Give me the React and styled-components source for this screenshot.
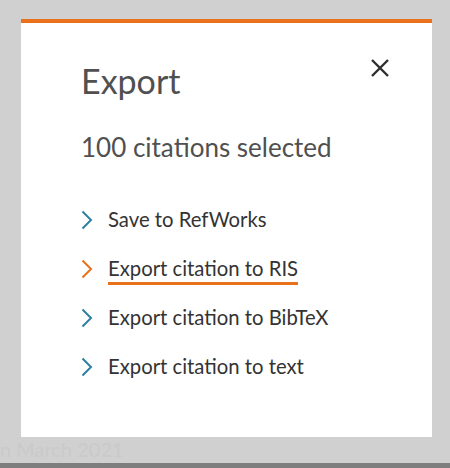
import React from "react"
import styled, { createGlobalStyle } from "styled-components"

const GlobalStyle = createGlobalStyle`
  html, body {
    margin: 0;
    padding: 0;
    background: #d0d0d0;
  }
  body {
    font-family: Lato, "Open Sans", sans-serif;
  }
`

const items = [
  { label: "Save to RefWorks" },
  { label: "Export citation to RIS", active: true },
  { label: "Export citation to BibTeX" },
  { label: "Export citation to text" }
]

const Chevron = ({ color }) => (
  <svg width="12" height="20" viewBox="0 0 12 20" fill="none">
    <path d="M1.5 1.5 L10 10 L1.5 18.5" stroke={color} strokeWidth="2" />
  </svg>
)

const App = () => {
  return (
    <Page>
      <GlobalStyle />
      <Backdrop>
        <Modal>
          <Header>
            <Title>Export</Title>
            <CloseButton aria-label="Close">
              <svg width="18" height="18" viewBox="0 0 18 18">
                <path d="M1 1 L17 17 M17 1 L1 17" stroke="#2e2e2e" strokeWidth="2.4" />
              </svg>
            </CloseButton>
          </Header>
          <Subtitle>100 citations selected</Subtitle>
          <List>
            {items.map((item) => (
              <Item key={item.label}>
                <Chevron color={item.active ? "#e9711c" : "#2e7fa0"} />
                <ItemLabel $active={item.active}>{item.label}</ItemLabel>
              </Item>
            ))}
          </List>
        </Modal>
        <GhostText>n March 2021</GhostText>
      </Backdrop>
      <BottomBar />
    </Page>
  )
}

export default App

const Page = styled.div`
  height: 468px;
  display: flex;
  flex-direction: column;
  overflow: hidden;
`
const Backdrop = styled.div`
  flex: 1;
  padding: 19px 18px 0 21px;
  display: flex;
  flex-direction: column;
`
const Modal = styled.div`
  height: 418px;
  box-sizing: border-box;
  background: #fff;
  border-top: 4px solid #e9711c;
  padding: 36px 43px 0 60px;
`
const Header = styled.div`
  display: flex;
  justify-content: space-between;
  align-items: flex-start;
`
const Title = styled.h2`
  margin: 0;
  font-weight: 400;
  font-size: 34px;
  line-height: 44px;
  color: #505050;
`
const CloseButton = styled.button`
  border: none;
  background: none;
  padding: 0;
  margin-top: 0;
  width: 18px;
  height: 18px;
  display: flex;
`
const Subtitle = styled.p`
  margin: 28px 0 0;
  font-size: 26px;
  line-height: 32px;
  color: #505050;
`
const List = styled.ul`
  list-style: none;
  margin: 43px 0 0;
  padding: 0;
  display: flex;
  flex-direction: column;
  gap: 21px;
`
const Item = styled.li`
  display: flex;
  align-items: center;
  gap: 15px;
  height: 28px;
`
const ItemLabel = styled.span`
  font-size: 20.3px;
  line-height: 28px;
  color: #333;
  border-bottom: 3px solid ${(p) => (p.$active ? "#e9711c" : "transparent")};
  padding-bottom: 0;
`
const GhostText = styled.div`
  margin-left: -21px;
  padding-top: 0;
  font-size: 20px;
  color: #cacaca;
`
const BottomBar = styled.div`
  height: 5px;
  background: #7e7e7e;
`
